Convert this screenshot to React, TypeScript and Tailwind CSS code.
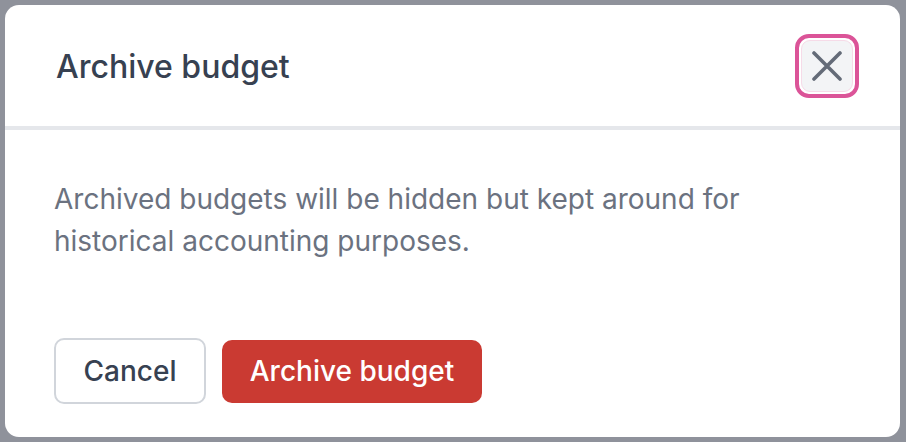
import React from "react";

export default function App() {
  return (
    <div
      className="w-[906px] h-[442px] bg-[#8f929b] p-[5px] overflow-hidden"
      style={{ fontFamily: "Inter, 'Noto Sans', sans-serif" }}
    >
      <div className="w-[895px] h-[432px] bg-white rounded-[14px] flex flex-col overflow-hidden">
        <div className="h-[125px] shrink-0 flex items-center justify-between pl-[51px] pr-[41px] border-b-[4px] border-[#e5e7eb]">
          <h2 className="text-[32px] leading-[40px] font-medium text-[#374151] pt-[2px]">
            Archive budget
          </h2>
          <button className="w-[64px] h-[64px] rounded-[14px] border-[4px] border-[#db5498] p-[2px] flex">
            <span className="flex-1 rounded-[9px] bg-[#f3f4f6] border border-[#f6dbe8] flex items-center justify-center">
              <svg width="30" height="30" viewBox="0 0 30 30" fill="none">
                <path
                  d="M2 2L28 28M28 2L2 28"
                  stroke="#646b78"
                  strokeWidth="3.6"
                  strokeLinecap="round"
                />
              </svg>
            </span>
          </button>
        </div>
        <div className="pt-[48px] pl-[49px] pr-[40px]">
          <p className="text-[28px] leading-[42px] text-[#6b7280] w-[720px]">
            Archived budgets will be hidden but kept around for historical
            accounting purposes.
          </p>
        </div>
        <div className="flex items-center gap-[16px] pl-[49px] mt-[76px]">
          <button className="h-[66px] w-[152px] rounded-[10px] border-[2px] border-[#d1d5db] bg-white text-[28px] font-medium text-[#374151]">
            Cancel
          </button>
          <button className="h-[63px] w-[260px] rounded-[10px] bg-[#ca3a32] text-[28px] font-medium text-white">
            Archive budget
          </button>
        </div>
      </div>
    </div>
  );
}
